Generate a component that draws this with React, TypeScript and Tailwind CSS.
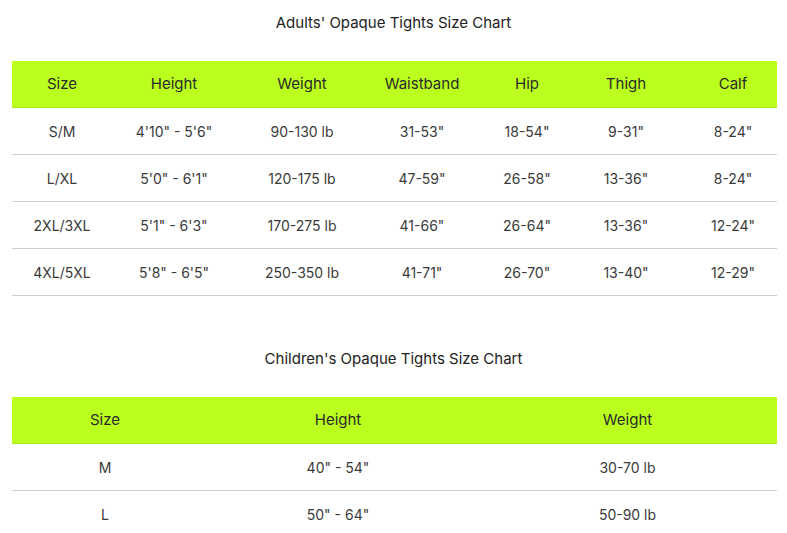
const adultCols = ['Size', 'Height', 'Weight', 'Waistband', 'Hip', 'Thigh', 'Calf'];

const adultRows = [
  ['S/M', `4'10" - 5'6"`, '90-130 lb', '31-53"', '18-54"', '9-31"', '8-24"'],
  ['L/XL', `5'0" - 6'1"`, '120-175 lb', '47-59"', '26-58"', '13-36"', '8-24"'],
  ['2XL/3XL', `5'1" - 6'3"`, '170-275 lb', '41-66"', '26-64"', '13-36"', '12-24"'],
  ['4XL/5XL', `5'8" - 6'5"`, '250-350 lb', '41-71"', '26-70"', '13-40"', '12-29"'],
];

const kidCols = ['Size', 'Height', 'Weight'];
const kidRows = [
  ['M', '40" - 54"', '30-70 lb'],
  ['L', '50" - 64"', '50-90 lb'],
];

const adultGrid = 'grid grid-cols-[85px_154px_102px_138px_72px_126px_88px]';
const kidGrid = 'grid grid-cols-[186px_280px_299px]';

export default function App() {
  return (
    <div className="w-[787px] h-[533px] overflow-hidden bg-white text-[#3a3a3a] font-['Inter','Lato',sans-serif]">
      {/* Adults */}
      <h2 className="pt-[12px] h-[61px] text-center text-[15px] text-[#222]">
        Adults' Opaque Tights Size Chart
      </h2>
      <div className="ml-3 w-[765px]">
        <div className={`${adultGrid} h-[47px] items-center bg-[#bbff1f] border-b border-[#a6e61a] text-[15px] text-[#2a2a2a]`}>
          {adultCols.map((c, i) => (
            <div key={c} className={`text-center ${i === 0 ? 'pl-[15px]' : ''}`}>{c}</div>
          ))}
        </div>
        {adultRows.map((row) => (
          <div key={row[0]} className={`${adultGrid} h-[47px] items-center border-b border-[#cfcfcf] text-[14px]`}>
            {row.map((v, i) => (
              <div key={i} className={`text-center ${i === 0 ? 'pl-[15px]' : ''}`}>{v}</div>
            ))}
          </div>
        ))}
      </div>

      {/* Children */}
      <h2 className="pt-[52px] h-[101px] text-center text-[15px] text-[#222]">
        Children's Opaque Tights Size Chart
      </h2>
      <div className="ml-3 w-[765px]">
        <div className={`${kidGrid} h-[47px] items-center bg-[#bbff1f] border-b border-[#a6e61a] text-[15px] text-[#2a2a2a]`}>
          {kidCols.map((c) => (
            <div key={c} className="text-center">{c}</div>
          ))}
        </div>
        {kidRows.map((row) => (
          <div key={row[0]} className={`${kidGrid} h-[47px] items-center border-b border-[#cfcfcf] text-[14px]`}>
            {row.map((v, i) => (
              <div key={i} className="text-center">{v}</div>
            ))}
          </div>
        ))}
      </div>
    </div>
  );
}
